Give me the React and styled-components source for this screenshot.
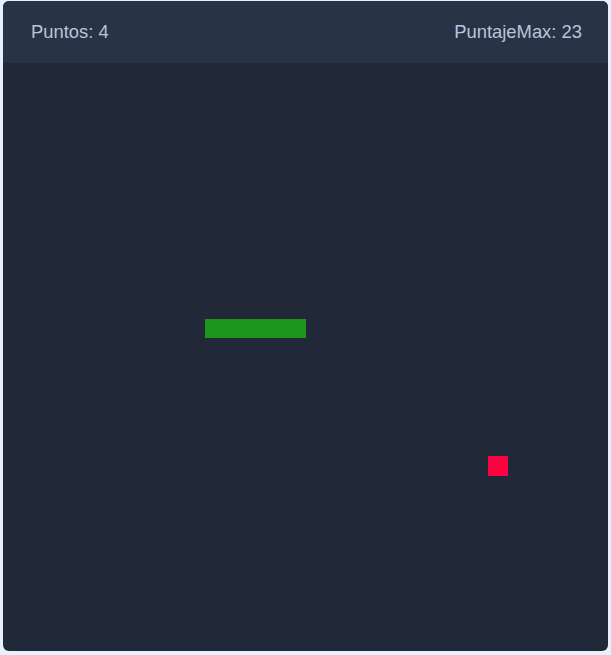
import styled, { createGlobalStyle } from "styled-components";

const GlobalStyle = createGlobalStyle`
  html, body {
    margin: 0;
    padding: 0;
    background: #e6f1fd;
    font-family: "Liberation Sans", Arial, sans-serif;
  }
`;

const snake = [
  { x: 202, y: 256, w: 101, h: 19 },
];

const food = { x: 485, y: 393 };

const Page = styled.div`
  width: 611px;
  height: 655px;
  display: flex;
  justify-content: center;
  padding-top: 1px;
  box-sizing: border-box;
`;

const Card = styled.div`
  width: 605px;
  height: 650px;
  border-radius: 6px;
  overflow: hidden;
  background: #212837;
  display: flex;
  flex-direction: column;
`;

const Header = styled.div`
  height: 62px;
  flex-shrink: 0;
  background: #283446;
  display: flex;
  align-items: center;
  justify-content: space-between;
  padding: 0 26px 0 28px;
  color: #b8c5d9;
  font-size: 18.4px;
`;

const Score = styled.span`
  line-height: 1;
  margin-top: 1px;
`;

const Board = styled.div`
  position: relative;
  flex: 1;
`;

const Cell = styled.div`
  position: absolute;
  background: ${(p) => p.$color};
`;

export default function App() {
  return (
    <>
      <GlobalStyle />
      <Page>
        <Card>
          <Header>
            <Score>Puntos: 4</Score>
            <Score>PuntajeMax: 23</Score>
          </Header>
          <Board>
            {snake.map((s, i) => (
              <Cell
                key={i}
                $color="#1e961c"
                style={{ left: s.x, top: s.y, width: s.w, height: s.h }}
              />
            ))}
            <Cell
              $color="#ff0040"
              style={{ left: food.x, top: food.y, width: 20, height: 20 }}
            />
          </Board>
        </Card>
      </Page>
    </>
  );
}
